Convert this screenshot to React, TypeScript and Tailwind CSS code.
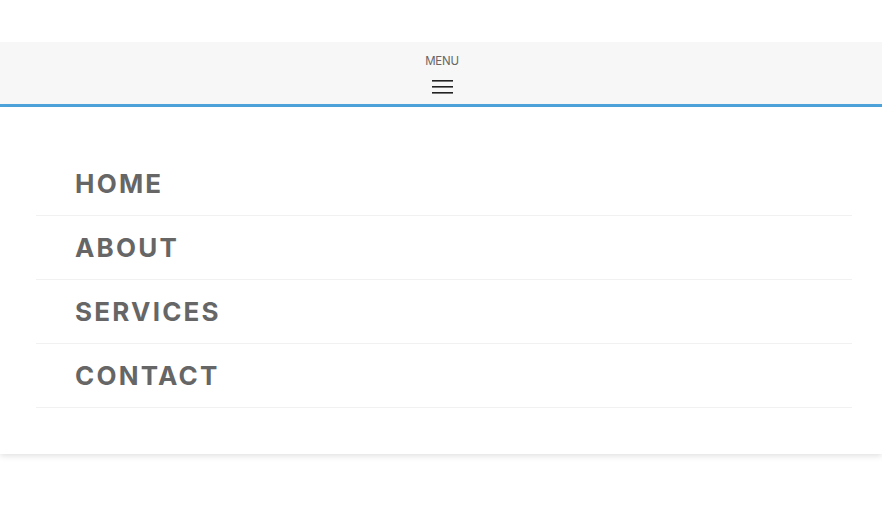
export default function App() {
  const items = ["Home", "About", "Services", "Contact"]
  return (
    <div className="min-h-[513px] bg-white font-['Inter',sans-serif]">
      <div className="h-[42px]" />
      <header className="border-b-[3px] border-[#4ea4dd] bg-[#f7f7f7]">
        <div className="flex h-[62px] flex-col items-center pt-[12px]">
          <span className="ml-[2px] text-[11.5px] leading-[14px] text-[#666] uppercase tracking-[-0.02em]">Menu</span>
          <svg width="21" height="14" viewBox="0 0 21 14" className="ml-[2px] mt-[12px]">
            <rect x="0" y="0" width="21" height="1.6" fill="#222" />
            <rect x="0" y="6" width="21" height="1.6" fill="#222" />
            <rect x="0" y="12" width="21" height="1.6" fill="#222" />
          </svg>
        </div>
      </header>
      <nav className="bg-white pl-[36px] pr-[30px] pt-[45px] pb-[46px] shadow-[0_2px_6px_rgba(0,0,0,0.12)]">
        <ul>
          {items.map((item) => (
            <li key={item} className="border-b border-[#f1f1f1]">
              <a
                href="#"
                className="flex h-[63px] items-center pl-[39px] text-[26px] font-bold uppercase tracking-[0.085em] text-[#666]"
              >
                {item}
              </a>
            </li>
          ))}
        </ul>
      </nav>
    </div>
  )
}
